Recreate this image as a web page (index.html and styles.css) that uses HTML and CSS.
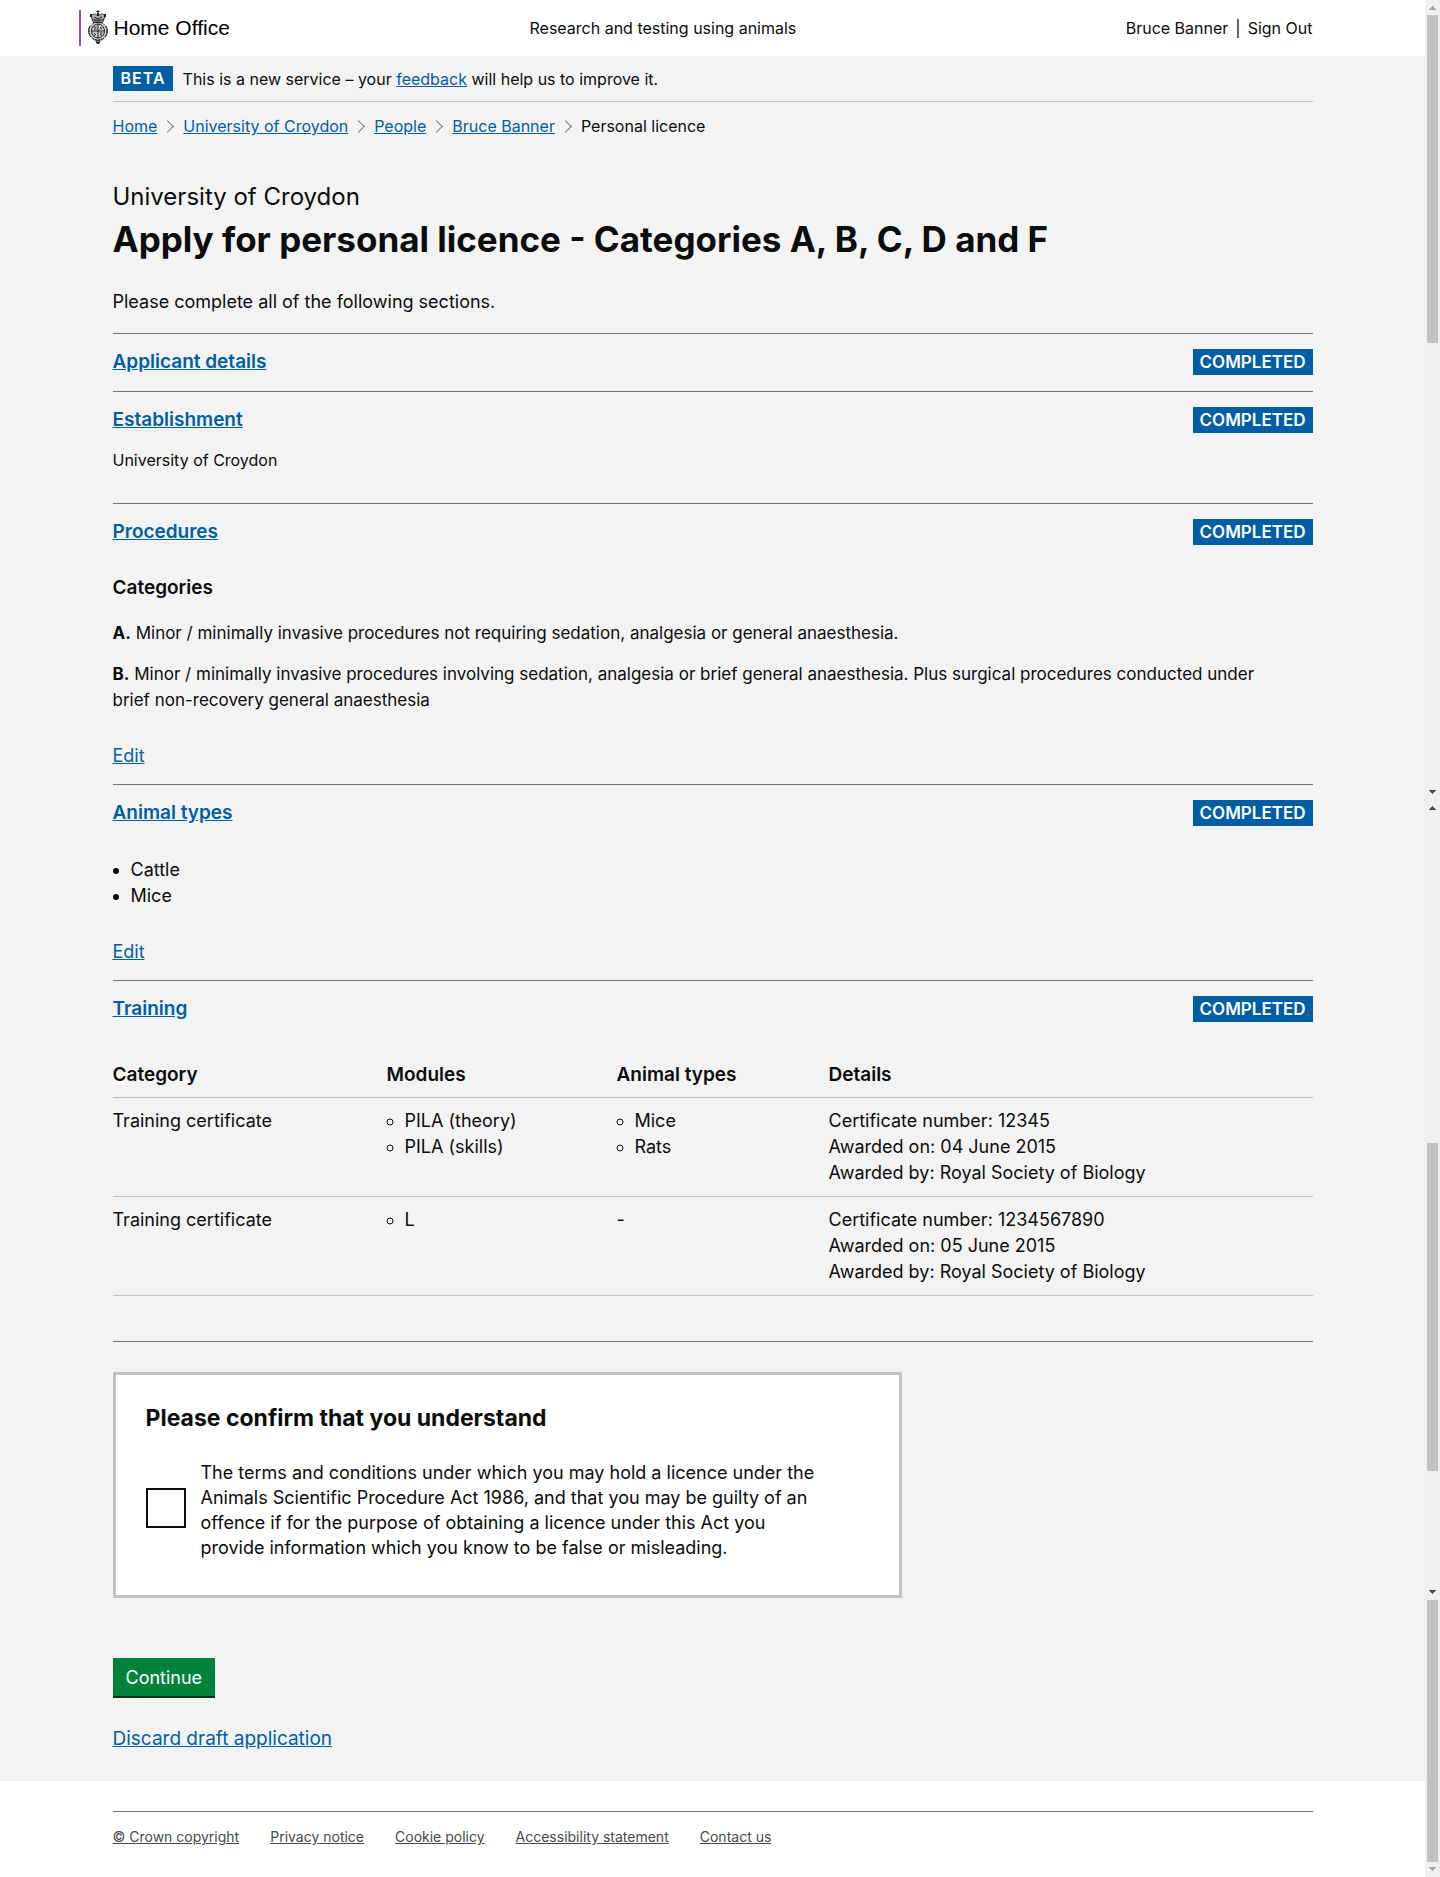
FILE: index.html
```html
<!DOCTYPE html>
<html lang="en">
<head>
<meta charset="utf-8">
<meta name="viewport" content="width=device-width, initial-scale=1">
<title>Apply for personal licence</title>
<link rel="stylesheet" href="styles.css">
</head>
<body>
<div class="page">
  <header class="site-header">
    <div class="container header-grid">
      <a class="logo" href="#">
        <svg class="crest" viewBox="0 0 20 36" width="20" height="36" aria-hidden="true">
          <ellipse cx="10" cy="21" rx="9" ry="9" fill="#ccc"/>
          <path fill="#aaa" d="M3 5h14l-1.500 6h-11z"/>
          <g fill="none" stroke="#222" stroke-width="1">
            <path d="M10 0v4M8.500 1.500h3M3 6c2-3 5-2 7 0 2-2 5-3 7 0M3 6l1.500 4h11L17 6M6 7l4 2 4-2M4 11h12M5 12.500h10"/>
            <ellipse cx="10" cy="21" rx="9" ry="9" stroke-dasharray="2 1"/>
            <ellipse cx="10" cy="21" rx="6.500" ry="7"/>
            <path d="M10 14v14M4 21h12M5.500 17h3M6 19h2.500M12 17l2 2M12 19.500l2-2M6 23l2 2M6 26l2-2M12 23h2.500M12 25h2"/>
            <path d="M2 16c-2 3-2 8 1 11M18 16c2 3 2 8-1 11M4 28c2 3 4 1 6 3 2-2 4 0 6-3M8 31h4l-1 2.500h-2z"/>
          </g>
          <path fill="#222" d="M2 4h2v3H2zM16 4h2v3h-2zM9 3h2v3H9zM9 32h2v2H9z"/>
        </svg>
        <span>Home Office</span>
      </a>
      <span>Research and testing using animals</span>
      <nav class="user-nav"><a href="#">Bruce Banner</a><span>|</span><a href="#">Sign Out</a></nav>
    </div>
  </header>
  <main class="main">
    <div class="container">
      <div class="phase"><strong class="tag tag-phase">BETA</strong><span>This is a new service – your <a href="#">feedback</a> will help us to improve it.</span></div>
      <nav aria-label="Breadcrumb">
        <ol class="crumbs">
          <li><a href="#">Home</a></li>
          <li><a href="#">University of Croydon</a></li>
          <li><a href="#">People</a></li>
          <li><a href="#">Bruce Banner</a></li>
          <li>Personal licence</li>
        </ol>
      </nav>
      <p class="caption">University of Croydon</p>
      <h1>Apply for personal licence - Categories A, B, C, D and F</h1>
      <p class="intro">Please complete all of the following sections.</p>

      <section class="task">
        <div class="task-head"><h2><a href="#">Applicant details</a></h2><strong class="tag">COMPLETED</strong></div>
      </section>
      <section class="task">
        <div class="task-head"><h2><a href="#">Establishment</a></h2><strong class="tag">COMPLETED</strong></div>
        <p class="establishment">University of Croydon</p>
      </section>
      <section class="task">
        <div class="task-head"><h2><a href="#">Procedures</a></h2><strong class="tag">COMPLETED</strong></div>
        <div class="task-body">
          <h3>Categories</h3>
          <p><strong>A.</strong> Minor / minimally invasive procedures not requiring sedation, analgesia or general anaesthesia.</p>
          <p><strong>B.</strong> Minor / minimally invasive procedures involving sedation, analgesia or brief general anaesthesia. Plus surgical procedures conducted under brief non-recovery general anaesthesia</p>
          <a class="edit" href="#">Edit</a>
        </div>
      </section>
      <section class="task">
        <div class="task-head"><h2><a href="#">Animal types</a></h2><strong class="tag">COMPLETED</strong></div>
        <div class="task-body">
          <ul class="bullets"><li>Cattle</li><li>Mice</li></ul>
          <a class="edit" href="#">Edit</a>
        </div>
      </section>
      <section class="task task-last">
        <div class="task-head"><h2><a href="#">Training</a></h2><strong class="tag">COMPLETED</strong></div>
        <table class="training">
          <colgroup><col class="col-category"><col class="col-modules"><col class="col-animals"><col></colgroup>
          <thead><tr><th scope="col">Category</th><th scope="col">Modules</th><th scope="col">Animal types</th><th scope="col">Details</th></tr></thead>
          <tbody>
            <tr>
              <td>Training certificate</td>
              <td><ul class="bullets hollow"><li>PILA (theory)</li><li>PILA (skills)</li></ul></td>
              <td><ul class="bullets hollow"><li>Mice</li><li>Rats</li></ul></td>
              <td>Certificate number: 12345<br>Awarded on: 04 June 2015<br>Awarded by: Royal Society of Biology</td>
            </tr>
            <tr>
              <td>Training certificate</td>
              <td><ul class="bullets hollow"><li>L</li></ul></td>
              <td>-</td>
              <td>Certificate number: 1234567890<br>Awarded on: 05 June 2015<br>Awarded by: Royal Society of Biology</td>
            </tr>
          </tbody>
        </table>
      </section>

      <form class="declaration">
        <div class="panel">
          <h2>Please confirm that you understand</h2>
          <div class="check">
            <input type="checkbox" id="agree">
            <label for="agree">The terms and conditions under which you may hold a licence under the Animals Scientific Procedure Act 1986, and that you may be guilty of an offence if for the purpose of obtaining a licence under this Act you provide information which you know to be false or misleading.</label>
          </div>
        </div>
        <button class="button" type="button">Continue</button>
        <a class="discard" href="#">Discard draft application</a>
      </form>
    </div>
  </main>
  <footer class="container">
    <ul class="footer-links">
      <li><a href="#">© Crown copyright</a></li>
      <li><a href="#">Privacy notice</a></li>
      <li><a href="#">Cookie policy</a></li>
      <li><a href="#">Accessibility statement</a></li>
      <li><a href="#">Contact us</a></li>
    </ul>
  </footer>
</div>
<div class="rail" aria-hidden="true">
  <svg class="arrow dim" viewBox="0 0 15 15"><path d="M7 6h1v1h1v1h1v1h1v1H4V9h1V8h1V7h1z"/></svg>
  <div class="thumb"></div>
  <div class="gap-long"></div>
  <svg class="arrow" viewBox="0 0 15 15"><path d="M4 5h7v1h-1v1H9v1H8v1H7V8H6V7H5V6H4z"/></svg>
  <svg class="arrow" viewBox="0 0 15 15"><path d="M7 6h1v1h1v1h1v1h1v1H4V9h1V8h1V7h1z"/></svg>
  <div class="gap-mid"></div>
  <div class="thumb"></div>
  <div class="gap-short"></div>
  <svg class="arrow" viewBox="0 0 15 15"><path d="M4 5h7v1h-1v1H9v1H8v1H7V8H6V7H5V6H4z"/></svg>
  <div class="thumb thumb-fill"></div>
  <svg class="arrow dim" viewBox="0 0 15 15"><path d="M4 5h7v1h-1v1H9v1H8v1H7V8H6V7H5V6H4z"/></svg>
</div>
</body>
</html>
```
FILE: styles.css
```css
* { box-sizing: border-box; }
body {
  margin: 0;
  display: flex;
  min-height: 100vh;
  background: #fff;
  color: #0b0c0c;
  font: 18px/26px Inter, "Liberation Sans", sans-serif;
}
h1, h2, h3, p, ul, ol { margin: 0; padding: 0; }
ol { list-style: none; }
a { color: #005ea5; }
.page { flex: 1; min-width: 0; }
.container { max-width: 1200px; margin: 0 auto; }

/* Header */
.header-grid {
  display: grid;
  grid-template-columns: 417px 1fr auto;
  align-items: center;
  height: 56px;
  font-size: 16px;
  line-height: 24px;
}
.header-grid a { color: inherit; text-decoration: none; }
.header-grid .logo {
  display: flex;
  align-items: center;
  gap: 6px;
  justify-self: start;
  margin-left: -34px;
  padding-left: 7px;
  height: 36px;
  border-left: 2px solid #8f4aa5;
  color: #000;
  font: 21px/36px "Liberation Sans", sans-serif;
}
.user-nav { display: flex; gap: 7px; }

/* Main column */
.main { background: #f3f3f3; padding: 10px 0 30px; }
.phase {
  display: flex;
  align-items: flex-start;
  gap: 10px;
  padding-bottom: 9px;
  border-bottom: 1px solid #bfc1c3;
  font-size: 16px;
  line-height: 26px;
}
.tag {
  padding: 0 7px;
  background: #005ea5;
  color: #fff;
  font-size: 17px;
  line-height: 26px;
  font-weight: 600;
}
.tag-phase { padding: 0 7px 0 8px; font-size: 16px; line-height: 25px; letter-spacing: 1px; }
.crumbs { display: flex; margin-top: 12px; font-size: 16px; line-height: 24px; }
.crumbs li { display: flex; align-items: center; }
.crumbs li + li::before {
  content: "";
  width: 8px;
  height: 8px;
  margin: 0 11px 0 6px;
  border: solid #6f777b;
  border-width: 1px 1px 0 0;
  transform: rotate(45deg);
}
.caption { margin-top: 44px; font-size: 24px; line-height: 30px; }
h1 { margin-top: 7px; font-size: 35px; line-height: 40px; font-weight: 700; }
.intro { margin: 30px 0 18px; }

/* Task sections */
.task { padding: 15px 0; border-top: 1px solid #6f777b; }
.task-head { display: flex; justify-content: space-between; align-items: flex-start; height: 27px; }
.task-head h2, h3 { font-size: 19px; line-height: 25px; font-weight: 600; }
.establishment { margin: 14px 0 16px; font-size: 16px; line-height: 24px; }
.task-body { margin-top: 30px; }
.task-body h3 { margin-bottom: 20px; line-height: 24px; }
.task-body p { padding-right: 20px; font-size: 17px; }
.task-body p + p { margin-top: 15px; }
.edit { display: block; width: max-content; margin-top: 30px; }
.bullets { padding-left: 18px; }
.hollow { list-style: circle; }
.task-last { padding-bottom: 45px; border-bottom: 1px solid #6f777b; }
.training { width: 100%; margin-top: 29px; border-collapse: collapse; }
.col-category { width: 274px; }
.col-modules { width: 230px; }
.col-animals { width: 212px; }
.training th, .training td {
  padding: 10px 20px 9px 0;
  border-bottom: 1px solid #bfc1c3;
  text-align: left;
  vertical-align: top;
}
.training th { font-size: 19px; font-weight: 600; }
.training td { padding-bottom: 10px; }

/* Declaration */
.declaration { display: flex; flex-direction: column; align-items: flex-start; margin-top: 30px; font-size: 19px; line-height: 25px; }
.panel { width: 100%; max-width: 789px; padding: 30px 30px 35px; border: 3px solid #bfc1c3; background: #fff; }
.panel h2 { font-size: 23px; line-height: 26px; font-weight: 700; margin-bottom: 29px; }
.check { display: flex; align-items: center; }
.check input {
  appearance: none;
  flex: none;
  width: 40px;
  height: 40px;
  margin: 0 0 4px;
  border: 2px solid #0b0c0c;
  background: #fff;
}
.check label { max-width: 660px; padding: 0 15px; font-size: 18px; }
.button {
  margin-top: 60px;
  height: 38px;
  padding: 0 13px;
  border: 0;
  background: #00823b;
  box-shadow: 0 2px 0 #003618;
  color: #fff;
  font: inherit;
  font-size: 18px;
}
.discard { margin-top: 30px; }

/* Footer */
.footer-links {
  display: flex;
  gap: 31px;
  margin-top: 30px;
  padding: 14px 0 28px;
  border-top: 1px solid #6f777b;
  list-style: none;
  font-size: 14px;
  line-height: 22px;
}
.footer-links a { color: #454a4d; }

/* Scroll rail */
.rail { display: flex; flex-direction: column; align-items: center; width: 15px; background: #f0f0f0; }
.arrow { flex: none; width: 15px; height: 15px; fill: #505050; }
.dim { fill: #a3a3a3; }
.thumb { flex: none; width: 11px; height: 328px; background: #c1c1c1; }
.thumb-fill { flex: 1; height: auto; }
.gap-long { height: 442px; }
.gap-mid { height: 328px; }
.gap-short { height: 114px; }
```
